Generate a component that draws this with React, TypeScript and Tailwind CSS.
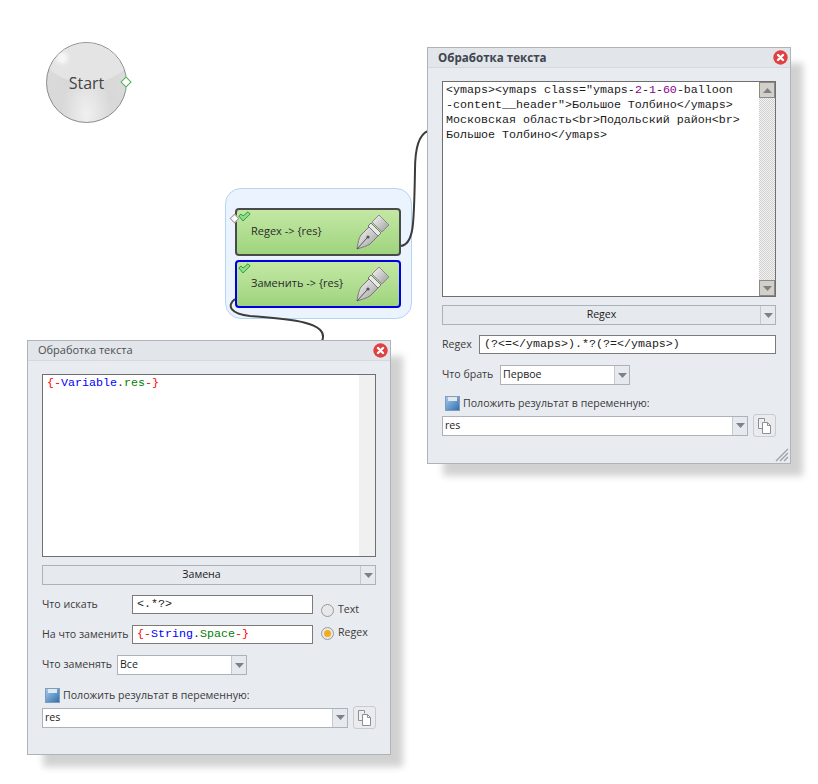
import React from 'react';

const Arrow = () => (
  <svg width="9" height="5" viewBox="0 0 9 5"><path d="M0 0h9L4.5 5z" fill="#7a828c" /></svg>
);

const ui = "font-['Open_Sans',sans-serif] text-[10.6px] text-[#3a3a3a] whitespace-nowrap";
const mono = "font-['Liberation_Mono',monospace] text-[11.67px] leading-[15px]";

const Combo = ({ label, center, className }: { label: string; center?: boolean; className?: string }) => (
  <div className={`flex h-[20px] items-stretch border border-[#abb2ba] ${center ? 'bg-[#e6e9ee]' : 'bg-white'} ${className ?? ''}`}>
    <div className={`flex min-w-0 flex-1 items-center px-[2px] text-[#1c1c1c] ${center ? 'justify-center' : ''}`}>{label}</div>
    <div className="flex w-[15px] items-center justify-center border-l border-[#c4c9cf] bg-[#e6e9ee]">
      <Arrow />
    </div>
  </div>
);

const CloseIcon = () => (
  <svg width="15" height="15" viewBox="0 0 15 15" className="shrink-0">
    <circle cx="7.5" cy="7.5" r="7.2" fill="#e23f3f" />
    <path d="M5 5l5 5M10 5l-5 5" stroke="#fff" strokeWidth="2.4" strokeLinecap="round" />
  </svg>
);

const SaveIcon = () => (
  <svg width="15" height="15" viewBox="0 0 15 15" className="shrink-0">
    <defs>
      <linearGradient id="save" x1="0" y1="0" x2="1" y2="1">
        <stop offset="0" stopColor="#a9cdec" />
        <stop offset="1" stopColor="#2d6cad" />
      </linearGradient>
    </defs>
    <rect x="0.5" y="0.5" width="14" height="14" fill="url(#save)" stroke="#7f9db8" />
    <rect x="3" y="1" width="9" height="4" fill="#dfe9f2" />
  </svg>
);

const CopyIcon = () => (
  <svg width="15" height="17" viewBox="0 0 15 17">
    <path d="M1.5 1.5h6v3M1.5 1.5v10h4" fill="#f4f5f7" stroke="#8b9096" />
    <path d="M5.5 5.5h5l3 3v8h-8z" fill="#fff" stroke="#8b9096" />
    <path d="M10.5 5.5v3h3" fill="none" stroke="#8b9096" />
  </svg>
);

const ResultRow = () => (
  <>
    <div className="flex h-[15px] items-center gap-[3px] pl-[3px]">
      <SaveIcon />
      <span>Положить результат в переменную:</span>
    </div>
    <div className="mt-[3px] flex h-[23px] items-center gap-[5px]">
      <Combo label="res" className="flex-1" />
      <div className="flex h-[23px] w-[23px] items-center justify-center rounded-[3px] border border-[#c8ccd2] bg-[#e9ebef]">
        <CopyIcon />
      </div>
    </div>
  </>
);

const Input = ({ children, className }: { children: React.ReactNode; className?: string }) => (
  <div className={`flex h-[19px] items-center border border-[#7b7b7b] bg-white px-[4px] text-[#222] ${mono} ${className ?? ''}`}>{children}</div>
);

const Radio = ({ label, on }: { label: string; on?: boolean }) => (
  <div className="flex h-[14px] items-center gap-[4px]">
    <div className="flex h-[13px] w-[13px] items-center justify-center rounded-full border border-[#9a9a9a] bg-[#e8e8e8]">
      {on && <div className="h-[7px] w-[7px] rounded-full bg-[#f0ae1e]" />}
    </div>
    <span>{label}</span>
  </div>
);

const Window = ({ title, bold, className, children }: { title: string; bold?: boolean; className: string; children: React.ReactNode }) => (
  <div className={`absolute flex w-[364px] flex-col border border-[#aeb3b9] bg-[#e8ebf0] shadow-[14px_14px_7px_-2px_rgba(0,0,0,0.18)] ${ui} ${className}`}>
    <div className="flex h-[20px] items-center justify-between border-b border-[#d5d8dc] bg-[#e2e5e9] pl-[10px] pr-[2px]">
      <span className={bold ? 'text-[11.6px] font-bold text-[#3d4650]' : 'text-[11px] text-[#4a4f55]'}>{title}</span>
      <CloseIcon />
    </div>
    <div className="flex flex-1 flex-col px-[14px] pt-[13px]">{children}</div>
  </div>
);

const Pen = () => (
  <svg width="34" height="36" viewBox="0 0 34 36" className="shrink-0">
    <defs>
      <linearGradient id="pen" x1="0" y1="0" x2="1" y2="1">
        <stop offset="0" stopColor="#fafafa" />
        <stop offset="1" stopColor="#9a9a9a" />
      </linearGradient>
    </defs>
    {/* nib */}
    <path d="M1 35C2 28 3 24 5 21L13 13L22 22L14 30C11 32 7 33 1 35Z" fill="url(#pen)" stroke="#777" />
    <path d="M1 35L11 24" stroke="#555" />
    <circle cx="12" cy="23" r="1.6" fill="#555" />
    {/* collar */}
    <path d="M12 12L15 9L25 19L22 22Z" fill="#e8e8e8" stroke="#777" />
    {/* cap */}
    <path d="M16 8L23 1L33 11L26 18Z" fill="url(#pen)" stroke="#8a8a8a" />
  </svg>
);

const Check = ({ className }: { className: string }) => (
  <svg width="13" height="11" viewBox="0 0 13 11" className={`absolute ${className}`}>
    <path d="M0.8 5L3 3L5 5L10 0.8L12.2 3L5 10Z" fill="#8fdc8a" stroke="#2f9e3d" strokeWidth="1" />
  </svg>
);

const Node = ({ label, selected }: { label: string; selected?: boolean }) => (
  <div className={`relative flex h-[48px] w-[166px] items-center justify-between rounded-[4px] border-2 bg-gradient-to-b from-[#c4e8a4] to-[#9ed47e] pl-[14px] pr-[9px] ${selected ? 'border-[#0000e0]' : 'border-[#4a4a4a]'}`}>
    <span className="pb-[2px] text-[11px] text-[#2b2b2b]">{label}</span>
    <Pen />
    <Check className="top-[1px] left-[1px]" />
  </div>
);

export default function App() {
  return (
    <div className={`relative h-[784px] w-[818px] overflow-hidden bg-white ${ui}`}>
      {/* start node */}
      <div className="absolute left-[46px] top-[42px] flex h-[81px] w-[81px] items-center justify-center overflow-hidden rounded-full border border-[#8a8a8a] bg-[radial-gradient(ellipse_at_50%_90%,#f0f0f0_0%,#d8d8d8_45%,#dcdcdc_100%)] text-[16px] text-[#444]">
        <div className="absolute -left-[6px] -top-[26px] h-[66px] w-[92px] rounded-[50%] bg-[#e4e4e4]" />
        <div className="absolute left-[9px] top-[9px] h-[12px] w-[12px] rounded-full bg-[#f7f7f7] blur-[2px]" />
        <span className="relative">Start</span>
      </div>
      <div className="absolute left-[122px] top-[78px] h-[8px] w-[8px] rotate-45 border border-[#4caf50] bg-white" />

      {/* group */}
      <div className="absolute left-[225px] top-[188px] flex h-[131px] w-[187px] flex-col gap-[4px] rounded-[16px] border border-[#b5d5f0] bg-[#ebf4fe] pl-[9px] pt-[19px]">
        <Node label="Regex -> {res}" />
        <Node label="Заменить -> {res}" selected />
      </div>
      <div className="absolute left-[231px] top-[215px] h-[7px] w-[7px] rotate-45 border border-[#9a9a9a] bg-white" />

      {/* connectors */}
      <svg width="818" height="784" className="pointer-events-none absolute left-0 top-0">
        <path d="M401 246C414 244 414 225 415 170C415 145 420 134 428 131" fill="none" stroke="#3c3c3c" strokeWidth="2" />
        <path d="M235 299C226 306 231 314 250 316C290 319 330 322 322 341" fill="none" stroke="#3c3c3c" strokeWidth="2" />
      </svg>

      {/* right window */}
      <Window title="Обработка текста" bold className="left-[427px] top-[47px] h-[417px]">
        <div className="relative h-[216px] border border-[#6f6f6f] bg-white">
          <div className={`w-[313px] pl-[3px] pt-[1px] text-[#1a1a1a] ${mono}`}>
            <div>&lt;ymaps&gt;&lt;ymaps class="ymaps-<span className="text-[#8b008b]">2</span>-<span className="text-[#8b008b]">1</span>-<span className="text-[#8b008b]">60</span>-balloon</div>
            <div>-content__header"&gt;Большое Толбино&lt;/ymaps&gt;</div>
            <div>Московская область&lt;br&gt;Подольский район&lt;br&gt;</div>
            <div>Большое Толбино&lt;/ymaps&gt;</div>
          </div>
          <div className="absolute bottom-0 right-0 top-0 flex w-[16px] flex-col justify-between bg-[repeating-conic-gradient(#cfcfcf_0_25%,#f4f4f4_0_50%)] bg-[length:2px_2px]">
            <div className="flex h-[16px] items-center justify-center border border-[#8a8a8a] bg-[#d4d0c8]">
              <svg width="9" height="5" viewBox="0 0 9 5"><path d="M0 5h9L4.5 0z" fill="#7a828c" /></svg>
            </div>
            <div className="flex h-[16px] items-center justify-center border border-[#8a8a8a] bg-[#d4d0c8]">
              <Arrow />
            </div>
          </div>
        </div>
        <Combo label="Regex" center className="mt-[8px]" />
        <div className="mt-[10px] flex items-center">
          <span className="w-[37px]">Regex</span>
          <Input className="flex-1">(?&lt;=&lt;/ymaps&gt;).*?(?=&lt;/ymaps&gt;)</Input>
        </div>
        <div className="mt-[11px] flex items-center">
          <span className="w-[58px]">Что брать</span>
          <Combo label="Первое" className="w-[130px]" />
        </div>
        <div className="mt-[11px]">
          <ResultRow />
        </div>
        {/* resize grip */}
        <svg width="14" height="14" viewBox="0 0 14 14" className="absolute bottom-[1px] right-[1px]">
          <path d="M1 13L13 1M5 13L13 5M9 13L13 9" stroke="#9aa0a6" strokeWidth="1.2" />
        </svg>
      </Window>

      {/* left window */}
      <Window title="Обработка текста" className="left-[27px] top-[340px] h-[415px]">
        <div className="relative h-[183px] border border-[#6f6f6f] bg-white">
          <div className={`pl-[4px] pt-[1px] ${mono}`}>
            <span className="text-[#ff0000]">{'{-'}</span>
            <span className="text-[#0000ff]">Variable</span>.<span className="text-[#008000]">res</span>
            <span className="text-[#ff0000]">{'-}'}</span>
          </div>
          <div className="absolute bottom-0 right-0 top-0 w-[16px] bg-[#f0f0f0]" />
        </div>
        <Combo label="Замена" center className="mt-[8px]" />
        <div className="mt-[10px] flex">
          <div className="flex flex-col gap-[11px]">
            <div className="flex items-center">
              <span className="w-[90px]">Что искать</span>
              <Input className="w-[181px]">&lt;.*?&gt;</Input>
            </div>
            <div className="flex items-center">
              <span className="w-[90px]">На что заменить</span>
              <Input className="w-[181px]">
                <span className="text-[#ff0000]">{'{-'}</span>
                <span className="text-[#0000ff]">String</span>.<span className="text-[#008000]">Space</span>
                <span className="text-[#ff0000]">{'-}'}</span>
              </Input>
            </div>
          </div>
          <div className="ml-[8px] flex flex-col gap-[9px] pt-[8px]">
            <Radio label="Text" />
            <Radio label="Regex" on />
          </div>
        </div>
        <div className="mt-[11px] flex items-center">
          <span className="w-[75px]">Что заменять</span>
          <Combo label="Все" className="w-[130px]" />
        </div>
        <div className="mt-[13px]">
          <ResultRow />
        </div>
      </Window>
    </div>
  );
}
